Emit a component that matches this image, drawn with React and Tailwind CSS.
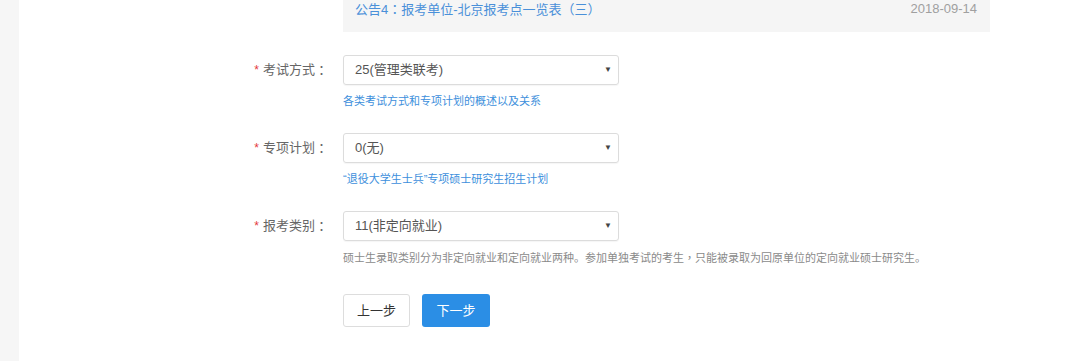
const font = { fontFamily: '"Liberation Sans", "Noto Sans CJK SC", sans-serif' };
const cjk = { fontFamily: '"Noto Sans CJK TC", "Noto Sans CJK SC", sans-serif' };

function Colon() {
  return (
    <span className="inline-block w-[13px] text-center" style={cjk}>
      ：
    </span>
  );
}

function Field({ label, value, hint, hintBlue, className }) {
  return (
    <div className={className}>
      <div className="flex items-center">
        <div className="w-[343px] pr-[15px] flex justify-end items-center text-[13px] text-[#666]">
          <span className="text-[#e4393c] mr-[4px] text-[12px]">*</span>
          <span>{label}</span>
          <Colon />
        </div>
        <div className="w-[276px] h-[30px] border border-[#dcdcdc] rounded-[3px] shadow-[0_1px_1px_rgba(0,0,0,0.04)] flex items-center justify-between pl-[11px] pr-[6px] text-[13px] text-[#555]">
          <span>{value}</span>
          <span className="text-[8px] text-[#444]">▼</span>
        </div>
      </div>
      <div
        className={
          "pl-[343px] mt-[8px] text-[11px] leading-[16px] " +
          (hintBlue ? "text-[#3d8fdc]" : "text-[#8a8a8a]")
        }
      >
        {hint}
      </div>
    </div>
  );
}

export default function App() {
  return (
    <div className="flex w-[1080px] h-[361px] bg-white overflow-hidden" style={font}>
      <div className="w-[19px] shrink-0 bg-[#f6f6f6]" />
      <div className="flex-1 flex flex-col -ml-[19px]">
        <div className="ml-[343px] w-[647px] h-[32px] bg-[#f5f5f5] flex justify-between pl-[12px] pr-[13px] pt-[1px] text-[13px] leading-[16px]">
          <span className="text-[#4a90d9]">
            公告4<Colon />报考单位-北京报考点一览表<span style={cjk}>（三）</span>
          </span>
          <span className="text-[#a0a0a0]">2018-09-14</span>
        </div>
        <Field
          className="mt-[23px]"
          label="考试方式"
          value="25(管理类联考)"
          hint="各类考试方式和专项计划的概述以及关系"
          hintBlue
        />
        <Field
          className="mt-[24px]"
          label="专项计划"
          value="0(无)"
          hint="“退役大学生士兵”专项硕士研究生招生计划"
          hintBlue
        />
        <Field
          className="mt-[24px]"
          label="报考类别"
          value="11(非定向就业)"
          hint={
            <>
              硕士生录取类别分为非定向就业和定向就业两种。参加单独考试的考生
              <span style={cjk}>，</span>
              只能被录取为回原单位的定向就业硕士研究生。
            </>
          }
        />
        <div className="ml-[343px] mt-[28px] flex gap-[12px] text-[13px]">
          <button className="w-[67px] h-[33px] border border-[#dddddd] rounded-[3px] bg-white text-[#333]">
            上一步
          </button>
          <button className="w-[68px] h-[33px] rounded-[3px] bg-[#2b8ee5] text-white">
            下一步
          </button>
        </div>
      </div>
    </div>
  );
}
